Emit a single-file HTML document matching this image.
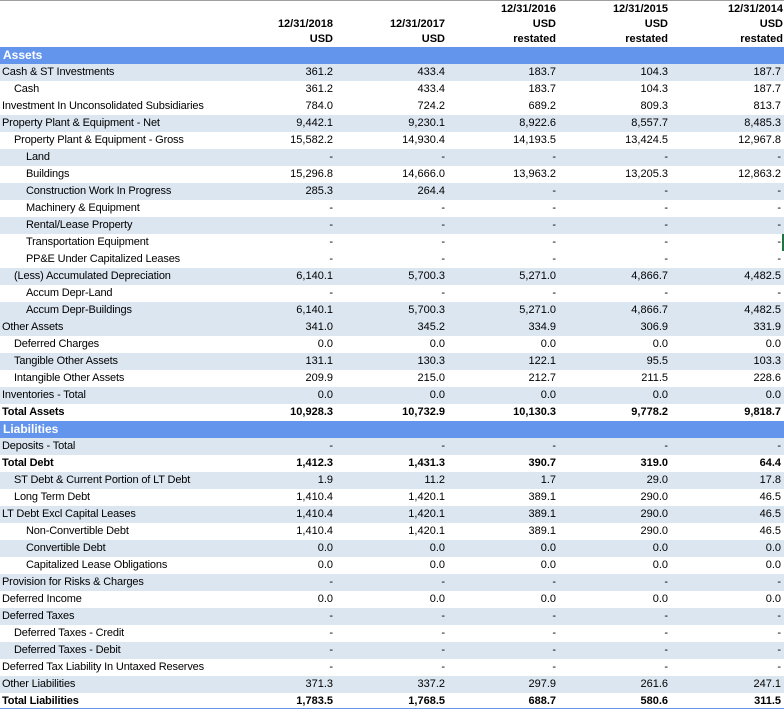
<!DOCTYPE html>
<html><head><meta charset="utf-8"><style>
*{margin:0;padding:0;box-sizing:border-box}
body{width:784px;height:709px;overflow:hidden;background:#fff;font-family:"Liberation Sans",Arial,sans-serif;font-size:11px;color:#000;position:relative}
.top{position:absolute;left:0;top:0;width:784px;height:1px;background:#a0a0a0}
.hd{position:absolute;top:0;height:45px;width:784px}
.hd span{position:absolute;font-weight:bold;text-align:right;line-height:15px}
.r{position:relative;height:17px;line-height:17px;white-space:nowrap}
.b{background:#dce6f1}
.s{background:#6495ed;color:#fff;font-weight:bold;font-size:12px;padding-left:3px}
.t{font-weight:bold}
.r>i{font-style:normal;position:absolute;left:2px;letter-spacing:-0.15px}
.l1>i{left:14px}.l2>i{left:26px}
.r>u{text-decoration:none;position:absolute;text-align:right}
.r>u:nth-of-type(1){right:451px}
.r>u:nth-of-type(2){right:339px}
.r>u:nth-of-type(3){right:228px}
.r>u:nth-of-type(4){right:116px}
.r>u:nth-of-type(5){right:3px}
</style></head><body>
<div class="top"></div>
<div class="hd">
<span style="right:451px;top:17px">12/31/2018<br>USD</span>
<span style="right:339px;top:17px">12/31/2017<br>USD</span>
<span style="right:228px;top:2px">12/31/2016<br>USD<br>restated</span>
<span style="right:116px;top:2px">12/31/2015<br>USD<br>restated</span>
<span style="right:1px;top:2px">12/31/2014<br>USD<br>restated</span>
</div>
<div style="position:absolute;top:47px;left:0;width:784px">
<div class="r s">Assets</div>
<div class="r b"><i>Cash &amp; ST Investments</i><u>361.2</u><u>433.4</u><u>183.7</u><u>104.3</u><u>187.7</u></div>
<div class="r l1"><i>Cash</i><u>361.2</u><u>433.4</u><u>183.7</u><u>104.3</u><u>187.7</u></div>
<div class="r"><i>Investment In Unconsolidated Subsidiaries</i><u>784.0</u><u>724.2</u><u>689.2</u><u>809.3</u><u>813.7</u></div>
<div class="r b"><i>Property Plant &amp; Equipment - Net</i><u>9,442.1</u><u>9,230.1</u><u>8,922.6</u><u>8,557.7</u><u>8,485.3</u></div>
<div class="r l1"><i>Property Plant &amp; Equipment - Gross</i><u>15,582.2</u><u>14,930.4</u><u>14,193.5</u><u>13,424.5</u><u>12,967.8</u></div>
<div class="r b l2"><i>Land</i><u>-</u><u>-</u><u>-</u><u>-</u><u>-</u></div>
<div class="r l2"><i>Buildings</i><u>15,296.8</u><u>14,666.0</u><u>13,963.2</u><u>13,205.3</u><u>12,863.2</u></div>
<div class="r b l2"><i>Construction Work In Progress</i><u>285.3</u><u>264.4</u><u>-</u><u>-</u><u>-</u></div>
<div class="r l2"><i>Machinery &amp; Equipment</i><u>-</u><u>-</u><u>-</u><u>-</u><u>-</u></div>
<div class="r b l2"><i>Rental/Lease Property</i><u>-</u><u>-</u><u>-</u><u>-</u><u>-</u></div>
<div class="r l2"><i>Transportation Equipment</i><u>-</u><u>-</u><u>-</u><u>-</u><u>-</u><b style="position:absolute;right:0;top:0;width:2px;height:17px;background:#217346"></b></div>
<div class="r l2"><i>PP&amp;E Under Capitalized Leases</i><u>-</u><u>-</u><u>-</u><u>-</u><u>-</u></div>
<div class="r b l1"><i>(Less) Accumulated Depreciation</i><u>6,140.1</u><u>5,700.3</u><u>5,271.0</u><u>4,866.7</u><u>4,482.5</u></div>
<div class="r l2"><i>Accum Depr-Land</i><u>-</u><u>-</u><u>-</u><u>-</u><u>-</u></div>
<div class="r b l2"><i>Accum Depr-Buildings</i><u>6,140.1</u><u>5,700.3</u><u>5,271.0</u><u>4,866.7</u><u>4,482.5</u></div>
<div class="r b"><i>Other Assets</i><u>341.0</u><u>345.2</u><u>334.9</u><u>306.9</u><u>331.9</u></div>
<div class="r l1"><i>Deferred Charges</i><u>0.0</u><u>0.0</u><u>0.0</u><u>0.0</u><u>0.0</u></div>
<div class="r b l1"><i>Tangible Other Assets</i><u>131.1</u><u>130.3</u><u>122.1</u><u>95.5</u><u>103.3</u></div>
<div class="r l1"><i>Intangible Other Assets</i><u>209.9</u><u>215.0</u><u>212.7</u><u>211.5</u><u>228.6</u></div>
<div class="r b"><i>Inventories - Total</i><u>0.0</u><u>0.0</u><u>0.0</u><u>0.0</u><u>0.0</u></div>
<div class="r t"><i>Total Assets</i><u>10,928.3</u><u>10,732.9</u><u>10,130.3</u><u>9,778.2</u><u>9,818.7</u></div>
<div class="r s">Liabilities</div>
<div class="r b"><i>Deposits - Total</i><u>-</u><u>-</u><u>-</u><u>-</u><u>-</u></div>
<div class="r t"><i>Total Debt</i><u>1,412.3</u><u>1,431.3</u><u>390.7</u><u>319.0</u><u>64.4</u></div>
<div class="r b l1"><i>ST Debt &amp; Current Portion of LT Debt</i><u>1.9</u><u>11.2</u><u>1.7</u><u>29.0</u><u>17.8</u></div>
<div class="r l1"><i>Long Term Debt</i><u>1,410.4</u><u>1,420.1</u><u>389.1</u><u>290.0</u><u>46.5</u></div>
<div class="r b"><i>LT Debt Excl Capital Leases</i><u>1,410.4</u><u>1,420.1</u><u>389.1</u><u>290.0</u><u>46.5</u></div>
<div class="r l2"><i>Non-Convertible Debt</i><u>1,410.4</u><u>1,420.1</u><u>389.1</u><u>290.0</u><u>46.5</u></div>
<div class="r b l2"><i>Convertible Debt</i><u>0.0</u><u>0.0</u><u>0.0</u><u>0.0</u><u>0.0</u></div>
<div class="r l2"><i>Capitalized Lease Obligations</i><u>0.0</u><u>0.0</u><u>0.0</u><u>0.0</u><u>0.0</u></div>
<div class="r b"><i>Provision for Risks &amp; Charges</i><u>-</u><u>-</u><u>-</u><u>-</u><u>-</u></div>
<div class="r"><i>Deferred Income</i><u>0.0</u><u>0.0</u><u>0.0</u><u>0.0</u><u>0.0</u></div>
<div class="r b"><i>Deferred Taxes</i><u>-</u><u>-</u><u>-</u><u>-</u><u>-</u></div>
<div class="r l1"><i>Deferred Taxes - Credit</i><u>-</u><u>-</u><u>-</u><u>-</u><u>-</u></div>
<div class="r b l1"><i>Deferred Taxes - Debit</i><u>-</u><u>-</u><u>-</u><u>-</u><u>-</u></div>
<div class="r"><i>Deferred Tax Liability In Untaxed Reserves</i><u>-</u><u>-</u><u>-</u><u>-</u><u>-</u></div>
<div class="r b"><i>Other Liabilities</i><u>371.3</u><u>337.2</u><u>297.9</u><u>261.6</u><u>247.1</u></div>
<div class="r t" style="border-bottom:1px solid #6495ed;height:16px;line-height:16px"><i>Total Liabilities</i><u>1,783.5</u><u>1,768.5</u><u>688.7</u><u>580.6</u><u>311.5</u></div>
</div>
</body></html>
